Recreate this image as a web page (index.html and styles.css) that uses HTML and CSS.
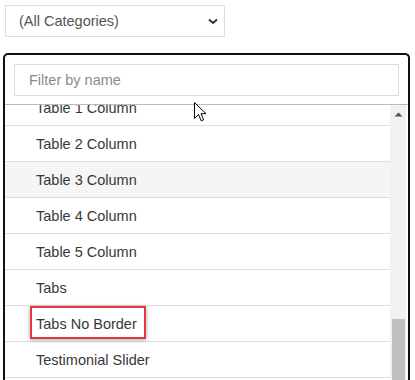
FILE: index.html
```html
<!DOCTYPE html>
<html>
<head>
<meta charset="utf-8">
<link rel="stylesheet" href="styles.css">
</head>
<body>
<div class="select">
  <span>(All Categories)</span>
  <svg class="chev" width="10" height="7" viewBox="0 0 10 7"><path d="M1 1.5 L5 5 L9 1.5" fill="none" stroke="#333" stroke-width="2"/></svg>
</div>
<div class="panel">
  <div class="filter-wrap">
    <div class="filter">Filter by name</div>
  </div>
  <div class="listarea">
    <div class="list">
      <div class="row">Table 1 Column</div>
      <div class="row">Table 2 Column</div>
      <div class="row hover">Table 3 Column</div>
      <div class="row">Table 4 Column</div>
      <div class="row">Table 5 Column</div>
      <div class="row">Tabs</div>
      <div class="row">Tabs No Border</div>
      <div class="row">Testimonial Slider</div>
    </div>
    <div class="scrollbar">
      <svg class="up" width="9" height="5" viewBox="0 0 9 5"><path d="M0.5 4.5 L4.5 0.5 L8.5 4.5 Z" fill="#505050"/></svg>
      <div class="thumb"></div>
    </div>
  </div>
</div>
<div class="highlight"></div>
<svg class="cursor" width="13" height="21" viewBox="0 0 13 21"><path d="M0.5 0.5 L0.5 16.5 L4.5 12.5 L7.2 18.8 L9.6 17.8 L7 11.7 L12 11.7 Z" fill="#fff" stroke="#000" stroke-width="1" stroke-linejoin="miter"/></svg>
</body>
</html>
```
FILE: styles.css
```css
html, body { margin: 0; padding: 0; background: #fff; }
body {
  font-family: "Liberation Sans", Arial, sans-serif;
  font-size: 14px;
  color: #333;
  padding: 5px 0 0 3px;
  width: 415px;
  height: 380px;
  overflow: hidden;
  box-sizing: border-box;
  position: relative;
}
.select {
  margin-left: 2px;
  width: 220px;
  height: 32px;
  box-sizing: border-box;
  border: 1px solid #ddd;
  display: flex;
  align-items: center;
  justify-content: space-between;
  padding: 0 6px 0 13px;
  color: #555;
  font-size: 14.5px;
}
.chev { display: block; }
.panel {
  margin-top: 16px;
  width: 407px;
  height: 340px;
  box-sizing: border-box;
  border: 2px solid #111;
  border-bottom: none;
  border-radius: 5px 5px 0 0;
  overflow: hidden;
}
.filter-wrap {
  padding: 9px 9px 8px 9px;
  border-bottom: 1px solid #bbb;
}
.filter {
  height: 32px;
  box-sizing: border-box;
  border: 1px solid #ddd;
  display: flex;
  align-items: center;
  padding-left: 14px;
  color: #8a8a8a;
  font-size: 14.5px;
}
.listarea {
  display: flex;
  height: 300px;
  overflow: hidden;
}
.list {
  flex: 1;
  margin-top: -15px;
}
.row {
  height: 35px;
  border-bottom: 1px solid #ddd;
  display: flex;
  align-items: center;
  padding-left: 31px;
  font-size: 14.5px;
  color: #383838;
}
.row.hover { background: #f5f5f5; }
.scrollbar {
  width: 16px;
  margin-right: 2px;
  background: #f1f1f1;
  position: relative;
}
.up { position: absolute; left: 4px; top: 7px; }
.thumb {
  position: absolute;
  left: 2px;
  right: 1px;
  top: 214px;
  height: 100px;
  background: #c1c1c1;
}
.highlight {
  position: absolute;
  left: 30px;
  top: 306px;
  width: 116px;
  height: 33px;
  box-sizing: border-box;
  border: 2px solid #e2393f;
  box-shadow: 0 1px 4px rgba(0,0,0,0.35);
}
.cursor { position: absolute; left: 194px; top: 102px; }
```
